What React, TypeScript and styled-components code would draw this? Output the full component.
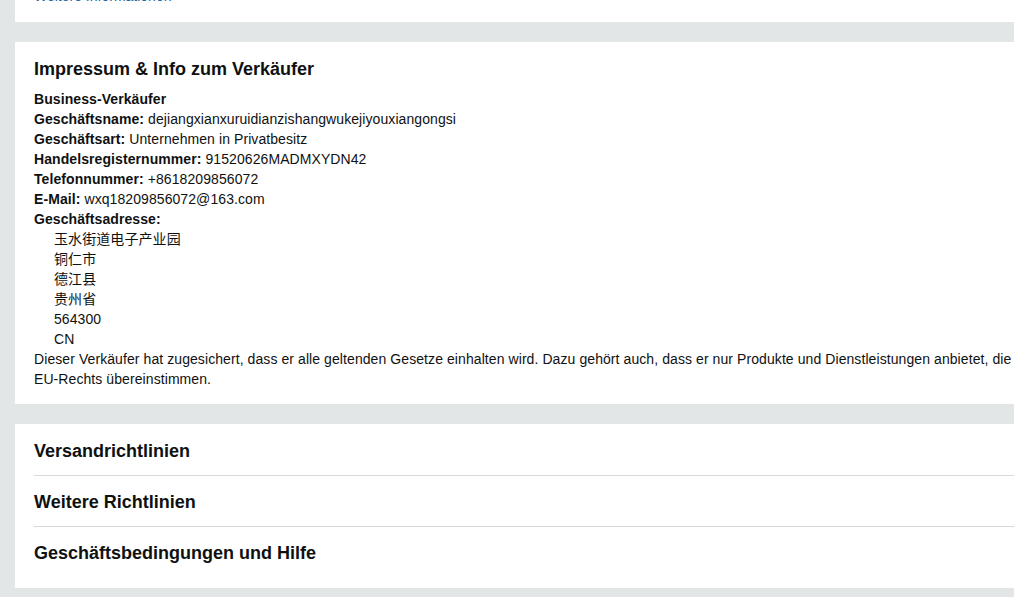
import styled, { createGlobalStyle } from 'styled-components';

const GlobalStyle = createGlobalStyle`
  html, body {
    margin: 0;
    padding: 0;
    background: #e3e6e6;
    overflow: hidden;
  }
  body {
    font-family: "Liberation Sans", Arial, "Noto Sans CJK SC", sans-serif;
    color: #0f1111;
    font-size: 14px;
    line-height: 20px;
  }
`;

const Page = styled.div`
  width: 1400px;
  padding: 0 0 0 15px;
  display: flex;
  flex-direction: column;
  gap: 20px;
  margin-top: -14px;
`;

const Card = styled.section<{ $pad?: string }>`
  background: #fff;
  padding: ${(p) => p.$pad ?? '15px 19px'};
`;

const Link = styled.a`
  color: #2162a1;
  text-decoration: none;
  font-size: 14px;
`;

const Title = styled.h2`
  margin: 0 0 8px;
  font-size: 18px;
  line-height: 24px;
  font-weight: 700;
`;

const Line = styled.div<{ $indent?: boolean }>`
  padding-left: ${(p) => (p.$indent ? '20px' : '0')};
  white-space: nowrap;
  letter-spacing: 0.08px;
`;

const Label = styled.span`
  font-weight: 700;
`;

const PolicyList = styled.div`
  display: flex;
  flex-direction: column;
`;

const PolicyRow = styled.div`
  height: 51px;
  box-sizing: border-box;
  padding-top: 2px;
  display: flex;
  align-items: center;
  font-size: 18px;
  font-weight: 700;
  border-top: 1px solid #d5d9d9;
  &:first-child {
    border-top: none;
  }
`;

const info: [string, string][] = [
  ['Geschäftsname:', 'dejiangxianxuruidianzishangwukejiyouxiangongsi'],
  ['Geschäftsart:', 'Unternehmen in Privatbesitz'],
  ['Handelsregisternummer:', '91520626MADMXYDN42'],
  ['Telefonnummer:', '+8618209856072'],
  ['E-Mail:', 'wxq18209856072@163.com'],
];

const address = ['玉水街道电子产业园', '铜仁市', '德江县', '贵州省', '564300', 'CN'];

const policies = ['Versandrichtlinien', 'Weitere Richtlinien', 'Geschäftsbedingungen und Hilfe'];

export default function App() {
  return (
    <>
      <GlobalStyle />
      <Page>
        <Card $pad="0 19px 16px">
          <Link href="#">Weitere Informationen</Link>
        </Card>
        <Card>
          <Title>Impressum &amp; Info zum Verkäufer</Title>
          <Line>
            <Label>Business-Verkäufer</Label>
          </Line>
          {info.map(([k, v]) => (
            <Line key={k}>
              <Label>{k}</Label> {v}
            </Line>
          ))}
          <Line>
            <Label>Geschäftsadresse:</Label>
          </Line>
          {address.map((a) => (
            <Line $indent key={a}>
              {a}
            </Line>
          ))}
          <Line>
            Dieser Verkäufer hat zugesichert, dass er alle geltenden Gesetze einhalten wird. Dazu gehört auch,
            dass er nur Produkte und Dienstleistungen anbietet, die mit den geltenden Vorschriften des
            <br />
            EU-Rechts übereinstimmen.
          </Line>
        </Card>
        <Card $pad="0 19px 11px">
          <PolicyList>
            {policies.map((p) => (
              <PolicyRow key={p}>{p}</PolicyRow>
            ))}
          </PolicyList>
        </Card>
      </Page>
    </>
  );
}
